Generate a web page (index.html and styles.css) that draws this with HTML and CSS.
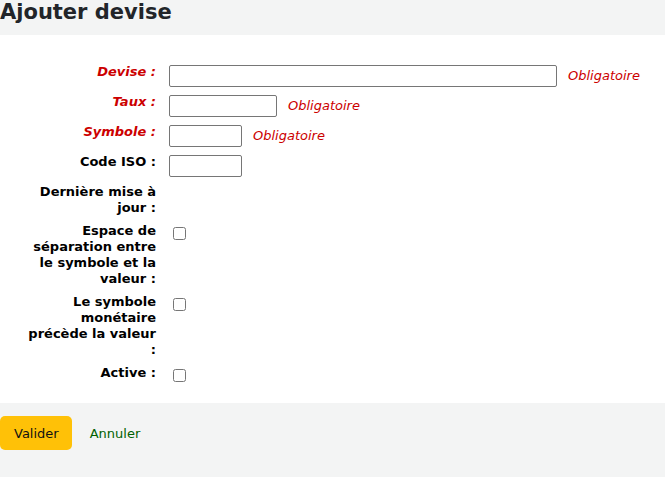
FILE: index.html
```html
<!DOCTYPE html>
<html lang="fr">
<head>
  <meta charset="UTF-8">
  <meta name="viewport" content="width=device-width, initial-scale=1.0">
  <link rel="stylesheet" href="styles.css">
  <title>Ajouter devise</title>
</head>
<body>

  <h1>Ajouter devise</h1>

  <form id="currency-form">
    <fieldset class="rows">
      <ol>
        <li>
          <label for="currency" class="required">Devise :</label>
          <input type="text" id="currency" class="input-long">
          <span class="required">Obligatoire</span>
        </li>
        <li>
          <label for="rate" class="required">Taux :</label>
          <input type="text" id="rate" class="input-medium">
          <span class="required">Obligatoire</span>
        </li>
        <li>
          <label for="symbol" class="required">Symbole :</label>
          <input type="text" id="symbol" class="input-short">
          <span class="required">Obligatoire</span>
        </li>
        <li>
          <label for="isocode">Code ISO :</label>
          <input type="text" id="isocode" class="input-short">
        </li>
        <li>
          <label>Dernière mise à jour :</label>
        </li>
        <li>
          <label for="p_sep_by_space">Espace de séparation entre le symbole et la valeur :</label>
          <input type="checkbox" id="p_sep_by_space">
        </li>
        <li>
          <label for="p_cs_precedes">Le symbole monétaire précède la valeur :</label>
          <input type="checkbox" id="p_cs_precedes">
        </li>
        <li>
          <label for="active">Active :</label>
          <input type="checkbox" id="active">
        </li>
      </ol>
    </fieldset>

    <fieldset class="action">
      <button type="submit" class="btn-primary">Valider</button>
      <a href="#" class="cancel">Annuler</a>
    </fieldset>
  </form>

</body>
</html>
```

FILE: styles.css
```css
body {
  font-family: "DejaVu Sans", Verdana, sans-serif;
  font-size: 13px;
  margin: 0;
  padding: 0;
  background-color: #f3f4f4;
  color: #000;
}

h1 {
  margin: 0;
  padding: 0 0 11px 0;
  font-size: 21px;
  line-height: 24px;
  font-weight: bold;
  color: #222529;
}

fieldset {
  margin: 0;
  border: none;
  min-width: 0;
}

fieldset.rows {
  background-color: #fff;
  padding: 29px 0 11px 0;
}

fieldset.rows ol {
  list-style: none;
  margin: 0;
  padding: 0 0 0 26px;
}

fieldset.rows li {
  display: flex;
  align-items: flex-start;
  margin-bottom: 7px;
}

fieldset.rows label {
  flex: 0 0 130px;
  margin-right: 13px;
  text-align: right;
  font-weight: bold;
  line-height: 16px;
}

label.required {
  color: #cc0000;
  font-style: italic;
}

span.required {
  color: #cc0000;
  font-style: italic;
  line-height: 16px;
  margin: 4px 0 0 11px;
}

input[type="text"] {
  box-sizing: border-box;
  height: 22px;
  margin: 1px 0 0 0;
  padding: 1px 4px;
  border: 1px solid #767676;
  border-radius: 2px;
  font-family: inherit;
  font-size: 13px;
  background: #fff;
}

.input-long {
  width: 388px;
}

.input-medium {
  width: 108px;
}

.input-short {
  width: 73px;
}

input[type="checkbox"] {
  width: 13px;
  height: 13px;
  margin: 4px 3px 3px 4px;
}

fieldset.action {
  padding: 13px 0 0 0;
  display: flex;
  align-items: center;
}

.btn-primary {
  height: 34px;
  padding: 0 13px 0 14px;
  background-color: #ffc107;
  border: none;
  border-radius: 5px;
  font-family: inherit;
  font-size: 13px;
  color: #111;
  cursor: pointer;
}

.cancel {
  margin-left: 18px;
  color: #006100;
  text-decoration: none;
}
```
